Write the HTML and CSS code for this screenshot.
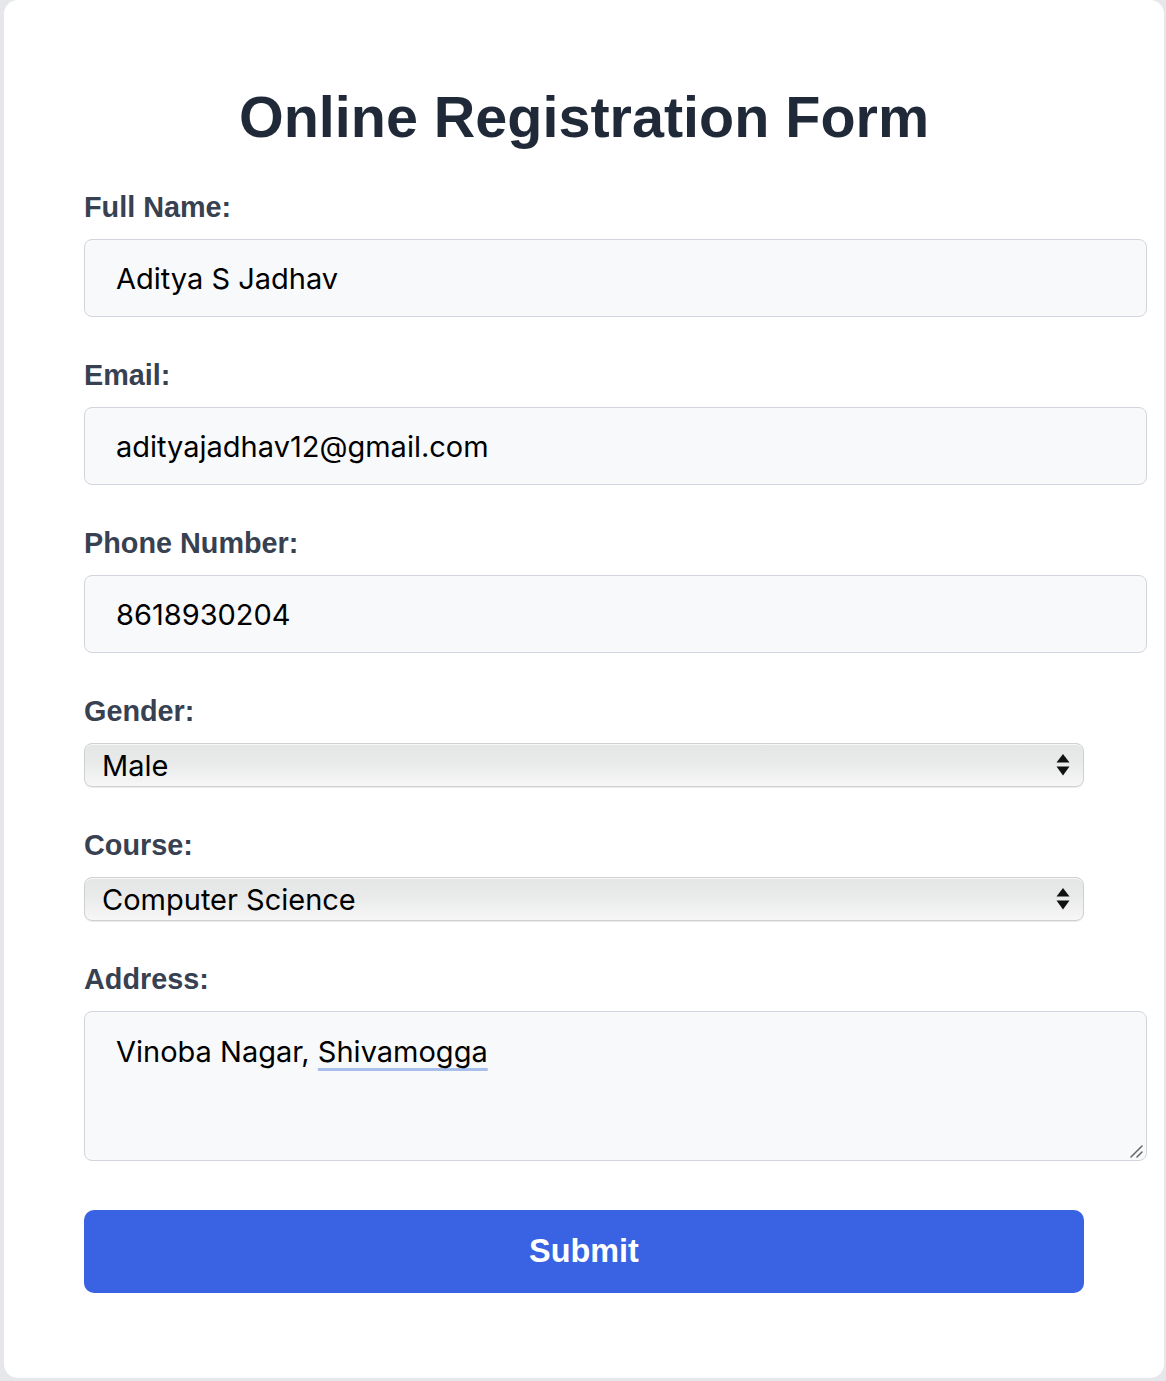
FILE: index.html
```html
<!DOCTYPE html>
<html lang="en">
<head>
<meta charset="utf-8">
<title>Online Registration Form</title>
<link rel="stylesheet" href="styles.css">
</head>
<body>
<div class="card">
  <h1 class="title">Online Registration Form</h1>
  <form class="form">
    <div class="field">
      <label class="label" for="name">Full Name:</label>
      <input class="input" id="name" type="text" value="Aditya S Jadhav">
    </div>
    <div class="field">
      <label class="label" for="email">Email:</label>
      <input class="input" id="email" type="email" value="adityajadhav12@gmail.com">
    </div>
    <div class="field">
      <label class="label" for="phone">Phone Number:</label>
      <input class="input" id="phone" type="tel" value="8618930204">
    </div>
    <div class="field">
      <label class="label" for="gender">Gender:</label>
      <div class="select-wrap">
        <select class="select" id="gender">
          <option>Male</option>
          <option>Female</option>
          <option>Other</option>
        </select>
        <svg class="select-arrows" width="14" height="24" viewBox="0 0 14 24"><path d="M7 1 L13.5 9.5 L0.5 9.5 Z" fill="#111"/><path d="M0.5 13.5 L13.5 13.5 L7 22.5 Z" fill="#111"/></svg>
      </div>
    </div>
    <div class="field">
      <label class="label" for="course">Course:</label>
      <div class="select-wrap">
        <select class="select" id="course">
          <option>Computer Science</option>
          <option>Electronics</option>
          <option>Mechanical</option>
        </select>
        <svg class="select-arrows" width="14" height="24" viewBox="0 0 14 24"><path d="M7 1 L13.5 9.5 L0.5 9.5 Z" fill="#111"/><path d="M0.5 13.5 L13.5 13.5 L7 22.5 Z" fill="#111"/></svg>
      </div>
    </div>
    <div class="field">
      <label class="label" id="addr-label">Address:</label>
      <div class="textarea" role="textbox" aria-multiline="true" aria-labelledby="addr-label" contenteditable="true">Vinoba Nagar, <span class="spell">Shivamogga</span></div>
      <svg class="resize" width="14" height="14" viewBox="0 0 14 14"><path d="M2 13 L13 2 M8 13 L13 8" stroke="#6b6b6b" stroke-width="1.6" stroke-linecap="round"/></svg>
    </div>
    <button class="submit" type="button">Submit</button>
  </form>
</div>
</body>
</html>
```
FILE: styles.css
```css
* { box-sizing: border-box; }
html, body { margin: 0; padding: 0; }
body {
  background: #e6e7ea;
  padding: 0 2px 3px 4px;
  font-family: "Liberation Sans", Arial, sans-serif;
}
.card {
  background: #ffffff;
  width: 1160px;
  border-radius: 14px;
  padding: 85px 80px 85px 80px;
}
.title {
  margin: 0 0 42px;
  font-size: 57.5px;
  line-height: 64px;
  font-weight: 700;
  color: #1f2937;
  text-align: center;
  width: 1000px;
}
.form {
  display: flex;
  flex-direction: column;
  width: 1000px;
}
.field {
  display: flex;
  flex-direction: column;
  margin-bottom: 42px;
  position: relative;
}
.label {
  display: block;
  font-size: 28.8px;
  line-height: 32px;
  font-weight: 700;
  color: #374151;
  margin-bottom: 16px;
}
.input {
  width: 1063px;
  height: 78px;
  border: 1.5px solid #d1d5db;
  border-radius: 8px;
  background: #f8f9fb;
  padding: 0 30px 0 31px;
  font-family: Inter, "Noto Sans", sans-serif;
  font-size: 29px;
  color: #000;
  outline: none;
}
.select-wrap {
  position: relative;
  width: 1000px;
  height: 44px;
}
.select {
  appearance: none;
  -webkit-appearance: none;
  width: 1000px;
  height: 44px;
  border: 1px solid #cfd0d2;
  border-radius: 8px;
  background: linear-gradient(#e4e5e5 0%, #e9eaea 45%, #f3f3f3 85%, #f7f7f7 100%);
  box-shadow: inset 0 1px 0 rgba(255,255,255,0.7), 0 1px 1px rgba(0,0,0,0.08);
  padding: 0 17px;
  font-family: Inter, "Noto Sans", sans-serif;
  font-size: 29px;
  color: #000;
  outline: none;
}
.select-arrows {
  position: absolute;
  right: 14px;
  top: 10px;
  pointer-events: none;
}
.textarea {
  width: 1063px;
  height: 150px;
  border: 1.5px solid #d1d5db;
  border-radius: 8px;
  background: #f8f9fb;
  padding: 20px 30px 20px 31px;
  font-family: Inter, "Noto Sans", sans-serif;
  font-size: 29px;
  line-height: 40px;
  color: #000;
  outline: none;
}
.spell {
  text-decoration: underline;
  text-decoration-color: #a9bfeb;
  text-decoration-thickness: 3px;
  text-underline-offset: 6px;
}
.resize {
  position: absolute;
  left: 1045px;
  bottom: 3px;
  pointer-events: none;
}
.field:last-of-type { margin-bottom: 49px; }
.submit {
  width: 1000px;
  height: 83px;
  border: none;
  border-radius: 10px;
  background: #3a63e3;
  color: #ffffff;
  font-family: "Liberation Sans", Arial, sans-serif;
  font-size: 32.4px;
  font-weight: 700;
  cursor: pointer;
}
```
